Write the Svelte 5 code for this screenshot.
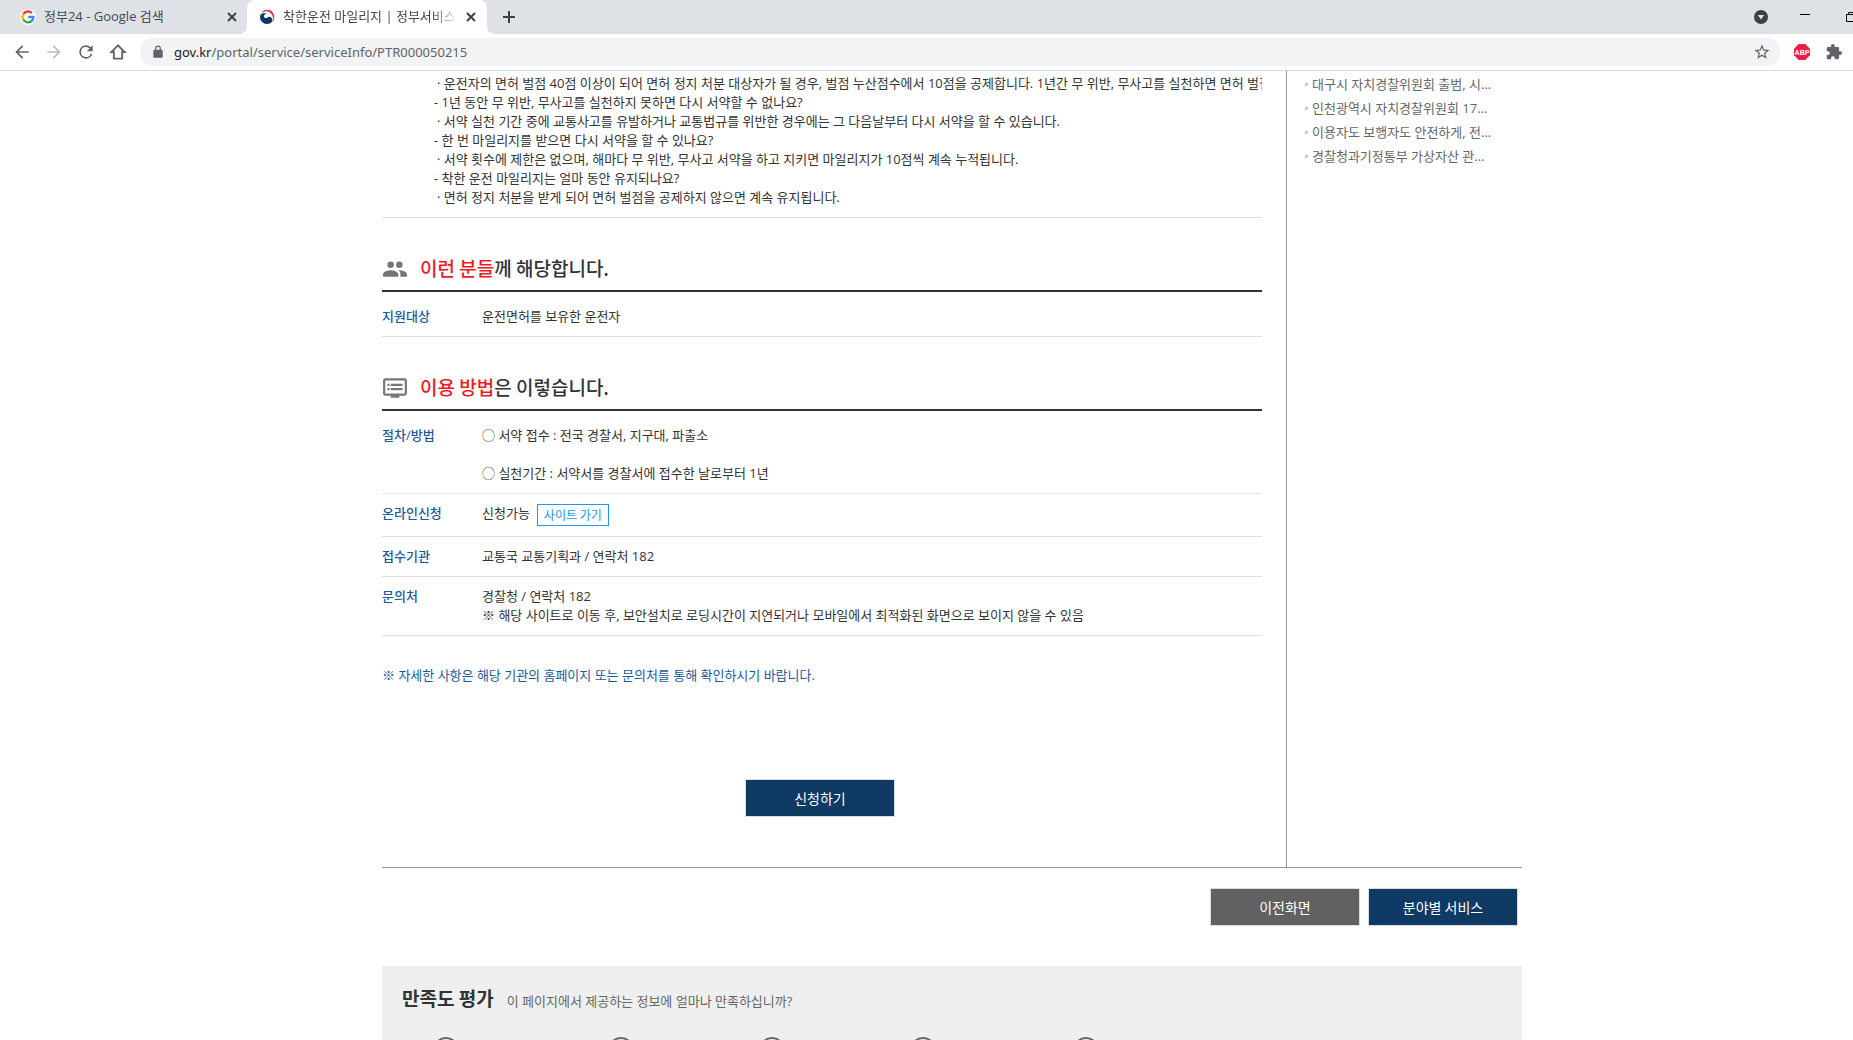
<!--
  Janela do navegador com a página de serviço do Governo 24.
-->
<script lang="ts">
  interface Row { label: string; lines: string[]; link?: string; }
  interface Section { icon: string; accent: string; rest: string; rows: Row[]; }

  const faq = [
    { answer: true, text: '· 운전자의 면허 벌점 40점 이상이 되어 면허 정지 처분 대상자가 될 경우, 벌점 누산점수에서 10점을 공제합니다. 1년간 무 위반, 무사고를 실천하면 면허 벌점' },
    { answer: false, text: '- 1년 동안 무 위반, 무사고를 실천하지 못하면 다시 서약할 수 없나요?' },
    { answer: true, text: '· 서약 실천 기간 중에 교통사고를 유발하거나 교통법규를 위반한 경우에는 그 다음날부터 다시 서약을 할 수 있습니다.' },
    { answer: false, text: '- 한 번 마일리지를 받으면 다시 서약을 할 수 있나요?' },
    { answer: true, text: '· 서약 횟수에 제한은 없으며, 해마다 무 위반, 무사고 서약을 하고 지키면 마일리지가 10점씩 계속 누적됩니다.' },
    { answer: false, text: '- 착한 운전 마일리지는 얼마 동안 유지되나요?' },
    { answer: true, text: '· 면허 정지 처분을 받게 되어 면허 벌점을 공제하지 않으면 계속 유지됩니다.' },
  ];

  const sections: Section[] = [
    {
      icon: 'people',
      accent: '이런 분들',
      rest: '께 해당합니다.',
      rows: [{ label: '지원대상', lines: ['운전면허를 보유한 운전자'] }],
    },
    {
      icon: 'screen',
      accent: '이용 방법',
      rest: '은 이렇습니다.',
      rows: [
        { label: '절차/방법', lines: ['◯ 서약 접수 : 전국 경찰서, 지구대, 파출소', '', '◯ 실천기간 : 서약서를 경찰서에 접수한 날로부터 1년'] },
        { label: '온라인신청', lines: ['신청가능'], link: '사이트 가기' },
        { label: '접수기관', lines: ['교통국 교통기획과 / 연락처 182'] },
        { label: '문의처', lines: ['경찰청 / 연락처 182', '※ 해당 사이트로 이동 후, 보안설치로 로딩시간이 지연되거나 모바일에서 최적화된 화면으로 보이지 않을 수 있음'] },
      ],
    },
  ];

  const news = [
    '대구시 자치경찰위원회 출범, 시...',
    '인천광역시 자치경찰위원회 17...',
    '이용자도 보행자도 안전하게, 전...',
    '경찰청과기정통부 가상자산 관...',
  ];

  const ratings = ['매우 만족', '만족', '보통', '불만족', '매우 불만족'];
  let rating = $state('');
</script>

<div class="window">
  <header>
    <div class="tabs">
      <div class="tab">
        <svg width="16" height="16" viewBox="0 0 16 16">
          <circle cx="8" cy="8" r="8" fill="#fff"/>
          <g fill="none" stroke-width="2.4">
            <path d="M11.9 4.100A5.400 5.400 0 0 0 3.300 5.300" stroke="#ea4335"/>
            <path d="M3.300 5.300a5.400 5.400 0 0 0 0 5.400" stroke="#fbbc05"/>
            <path d="M3.300 10.700a5.400 5.400 0 0 0 8.300 1.300" stroke="#34a853"/>
            <path d="M11.600 12A5.400 5.400 0 0 0 13.400 8H8.200" stroke="#4285f4"/>
          </g>
        </svg>
        <span class="tab-title">정부24 - Google 검색</span>
        <button class="close" aria-label="탭 닫기">
          <svg width="10" height="10" viewBox="0 0 10 10"><path d="M1 1l8 8M9 1l-8 8"/></svg>
        </button>
      </div>
      <div class="tab active">
        <svg width="16" height="16" viewBox="0 0 16 16">
          <circle cx="8" cy="8" r="7" fill="#0d3660"/>
          <path d="M7 1a7 7 0 0 1 6 12Q15 8 11.500 4.500 9.500 3 4.500 2.200 5.600 1.200 7 1z" fill="#e5384f"/>
          <path d="M2 4Q8 .5 12 4.500 15.500 8 12.800 13.500 14 9 11 7.800C8.800 7 8.200 9.800 6.200 9 3.800 8 5 5.400 7.500 4.600 5 3.800 3.400 4 2 5.500z" fill="#fff"/>
        </svg>
        <span class="tab-title fade">착한운전 마일리지 | 정부서비스</span>
        <button class="close" aria-label="탭 닫기">
          <svg width="10" height="10" viewBox="0 0 10 10"><path d="M1 1l8 8M9 1l-8 8"/></svg>
        </button>
      </div>
      <button class="new-tab" aria-label="새 탭">
        <svg width="12" height="12" viewBox="0 0 12 12"><path d="M6 0v12M0 6h12" stroke="#3c4043" stroke-width="2"/></svg>
      </button>
      <div class="controls">
        <button aria-label="탭 검색">
          <svg width="14" height="14" viewBox="0 0 14 14"><circle cx="7" cy="7" r="7" fill="#3c4043"/><path d="M3.8 5h6.4L7 9.6z" fill="#dee1e6"/></svg>
        </button>
        <button aria-label="최소화">
          <svg width="10" height="10" viewBox="0 0 10 10"><path d="M0 2.5h10" stroke="#000"/></svg>
        </button>
        <button class="restore" aria-label="이전 크기로">
          <svg width="10" height="10" viewBox="0 0 10 10" fill="none" stroke="#000"><path d="M.5 2.5h7v7h-7zM2.5 2.5v-2h7v7h-2"/></svg>
        </button>
      </div>
    </div>

    <div class="toolbar">
      <button aria-label="뒤로">
        <svg width="20" height="20" viewBox="0 0 24 24" fill="#5f6368"><path d="M20 11H7.83l5.59-5.59L12 4l-8 8 8 8 1.41-1.41L7.83 13H20z"/></svg>
      </button>
      <button aria-label="앞으로">
        <svg width="20" height="20" viewBox="0 0 24 24" fill="#babcbe"><path d="M12 4l-1.41 1.41L16.17 11H4v2h12.17l-5.58 5.59L12 20l8-8z"/></svg>
      </button>
      <button aria-label="새로고침">
        <svg width="20" height="20" viewBox="0 0 24 24" fill="#5f6368"><path d="M17.65 6.35A7.96 7.96 0 0 0 12 4a8 8 0 1 0 7.73 10h-2.08A6 6 0 1 1 12 6c1.66 0 3.14.69 4.22 1.78L13 11h7V4z"/></svg>
      </button>
      <button aria-label="홈">
        <svg width="20" height="20" viewBox="0 0 24 24" fill="none" stroke="#5f6368" stroke-width="2.2"><path d="M12 4l-8 8h3v8h10v-8h3z"/></svg>
      </button>
      <div class="omnibox">
        <svg width="14" height="14" viewBox="0 0 24 24" fill="#5f6368"><path d="M18 8h-1V6A5 5 0 0 0 7 6v2H6a2 2 0 0 0-2 2v10c0 1.1.9 2 2 2h12a2 2 0 0 0 2-2V10a2 2 0 0 0-2-2zM9 8V6a3 3 0 0 1 6 0v2z"/></svg>
        <a class="url" href="#top"><b>gov.kr</b>/portal/service/serviceInfo/PTR000050215</a>
        <button aria-label="북마크">
          <svg width="18" height="18" viewBox="0 0 24 24" fill="#5f6368"><path d="M22 9.24l-7.19-.62L12 2 9.19 8.63 2 9.24l5.46 4.73L5.82 21 12 17.27 18.18 21l-1.63-7.03zM12 15.4l-3.76 2.27 1-4.28-3.32-2.88 4.38-.38L12 6.1l1.71 4.04 4.38.38-3.32 2.88 1 4.28z"/></svg>
        </button>
      </div>
      <div class="extensions">
        <button aria-label="Adblock Plus">
          <svg width="16" height="16" viewBox="0 0 16 16">
            <path d="M4.7 0h6.6L16 4.7v6.6L11.3 16H4.7L0 11.3V4.7z" fill="#ed1e45"/>
            <text x="8" y="11" text-anchor="middle" font-size="7" font-weight="700" fill="#fff">ABP</text>
          </svg>
        </button>
        <button aria-label="확장 프로그램">
          <svg width="16" height="16" viewBox="1 1 22 22" fill="#5f6368"><path d="M20.5 11H19V7a2 2 0 0 0-2-2h-4V3.500a2.500 2.500 0 0 0-5 0V5H4a2 2 0 0 0-2 2v3.800h1.500a2.700 2.700 0 0 1 0 5.400H2V20c0 1.100.9 2 2 2h3.800v-1.500a2.700 2.700 0 0 1 5.400 0V22H17a2 2 0 0 0 2-2v-4h1.500a2.500 2.500 0 0 0 0-5z"/></svg>
        </button>
      </div>
    </div>
  </header>

  <div class="page" id="top">
    <div class="columns">
      <main>
        <div class="faq">
          {#each faq as item}
            <p class:answer={item.answer}>{item.text}</p>
          {/each}
        </div>

        {#each sections as section}
          <section>
            <h2>
              <svg width="26" height="26" viewBox="0 -1 24 24" fill="#767676">
                {#if section.icon === 'people'}
                  <path d="M16 11a3 3 0 1 0 0-6 3 3 0 0 0 0 6zm-8 0a3 3 0 1 0 0-6 3 3 0 0 0 0 6zm0 2c-2.330 0-7 1.170-7 3.500V19h14v-2.500C15 14.170 10.330 13 8 13zm8 0c-.29 0-.62.020-.97.050 1.160.840 1.970 1.970 1.970 3.450V19h6v-2.500c0-2.330-4.670-3.500-7-3.500z"/>
                {:else}
                  <path d="M21 3H3a2 2 0 0 0-2 2v12c0 1.100.9 2 2 2h5v2h8v-2h5a2 2 0 0 0 2-2V5a2 2 0 0 0-2-2zm0 14H3V5h18zm-2-9H8v2h11zm0 4H8v2h11zM7 8H5v2h2zm0 4H5v2h2z"/>
                {/if}
              </svg>
              <span><em>{section.accent}</em>{section.rest}</span>
            </h2>
            <dl>
              {#each section.rows as row}
                <div class="row">
                  <dt>{row.label}</dt>
                  <dd class:with-link={row.link}>
                    {#each row.lines as line}
                      <p>{line}</p>
                    {/each}
                    {#if row.link}
                      <a class="site-link" href="#top">{row.link}</a>
                    {/if}
                  </dd>
                </div>
              {/each}
            </dl>
          </section>
        {/each}

        <p class="notice">※ 자세한 사항은 해당 기관의 홈페이지 또는 문의처를 통해 확인하시기 바랍니다.</p>
        <div class="apply">
          <button class="btn">신청하기</button>
        </div>
      </main>

      <aside>
        <ul>
          {#each news as title}
            <li><a href="#top">{title}</a></li>
          {/each}
        </ul>
      </aside>
    </div>

    <div class="actions">
      <button class="btn gray">이전화면</button>
      <button class="btn">분야별 서비스</button>
    </div>

    <form class="survey">
      <div class="survey-head">
        <h3>만족도 평가</h3>
        <p>이 페이지에서 제공하는 정보에 얼마나 만족하십니까?</p>
      </div>
      <div class="ratings">
        {#each ratings as option}
          <input type="radio" name="rating" value={option} aria-label={option} bind:group={rating} />
        {/each}
      </div>
    </form>
  </div>
</div>

<style>
  .window {
    height: 100vh;
    overflow: hidden;
    display: flex;
    flex-direction: column;
    background: #fff;
    color: #333;
    font-family: "Open Sans", "Noto Sans CJK KR", sans-serif;
    font-size: 13px;
    line-height: 19px;
  }

  p, h2, h3, ul, dl, dd { margin: 0; padding: 0; }
  ul { list-style: none; }
  a { text-decoration: none; }
  svg { display: block; flex-shrink: 0; }

  button {
    border: 0;
    padding: 0;
    background: none;
    font: inherit;
    cursor: pointer;
  }

  header { flex-shrink: 0; border-bottom: 1px solid #dadce0; }

  /* barra de abas */
  .tabs {
    display: flex;
    height: 34px;
    overflow: hidden;
    background: #dee1e6;
  }

  .tab {
    display: flex;
    align-items: center;
    box-sizing: border-box;
    width: 240px;
    padding: 0 11px 0 12px;
    gap: 8px;
    color: #45494d;
  }
  .tab:first-child { width: 247px; padding-left: 20px; padding-right: 10px; }
  .tab.active {
    position: relative;
    background: #fff;
    border-radius: 8px 8px 0 0;
  }
  .tab.active::before,
  .tab.active::after {
    content: '';
    position: absolute;
    bottom: 0;
    width: 8px;
    height: 8px;
  }
  .tab.active::before {
    left: -8px;
    background: radial-gradient(circle at 0 0, transparent 8px, #fff 8px);
  }
  .tab.active::after {
    right: -8px;
    background: radial-gradient(circle at 100% 0, transparent 8px, #fff 8px);
  }

  .tab-title {
    flex: 1;
    overflow: hidden;
    padding-bottom: 2px;
    white-space: nowrap;
  }
  .fade { mask-image: linear-gradient(to right, #000 85%, transparent); }

  .close { stroke: #3c4043; stroke-width: 2; }
  .new-tab { margin-left: 16px; }

  .controls {
    display: flex;
    gap: 32px;
    margin-left: auto;
    margin-right: -3px;
    padding-bottom: 1px;
    align-items: center;
  }
  .restore { margin-left: 4px; }

  .toolbar {
    display: flex;
    align-items: center;
    height: 36px;
    padding: 0 11px 0 12px;
    gap: 12px;
  }

  .omnibox {
    flex: 1;
    display: flex;
    align-items: center;
    height: 28px;
    padding: 0 9px 0 11px;
    gap: 9px;
    border-radius: 14px;
    background: #f1f3f4;
  }

  .url {
    flex: 1;
    color: #5f6368;
    font-family: "Noto Sans", sans-serif;
  }
  .url b { font-weight: 400; color: #202124; }

  .extensions { display: flex; gap: 16px; margin-left: 2px; }
  .extensions text { font-family: "Liberation Sans", sans-serif; }

  /* conteúdo */
  .page { padding: 0 331px 0 382px; }

  .columns {
    display: flex;
    border-bottom: 1px solid #949494;
  }

  main {
    flex: 1;
    min-width: 0;
    padding-right: 24px;
    padding-bottom: 50px;
  }

  .faq {
    padding: 3px 0 10px 52px;
    border-bottom: 1px solid #e1e1e1;
  }
  .faq p { overflow: hidden; white-space: nowrap; }
  .faq .answer { padding-left: 3px; }

  h2, h3, .btn, .site-link { font-family: "Noto Sans CJK KR", sans-serif; }

  h2 {
    display: flex;
    align-items: center;
    gap: 12px;
    padding: 36px 0 8px;
    border-bottom: 2px solid #333;
    font-size: 19px;
    line-height: 28px;
    font-weight: 500;
  }
  h2 em { font-style: normal; color: #ed1c24; }

  .row {
    display: flex;
    padding: 10px 0;
    border-bottom: 1px solid #e1e1e1;
  }
  .row:first-child { padding-top: 15px; }

  dt {
    width: 100px;
    color: #1b5a9b;
    font-weight: 500;
  }
  dd { flex: 1; }
  dd p { min-height: 19px; }

  .with-link { display: flex; gap: 7px; }

  .site-link {
    box-sizing: border-box;
    height: 22px;
    padding: 0 6px;
    border: 1px solid #2196f3;
    color: #2196f3;
    font-size: 12px;
    line-height: 20px;
  }

  .notice { padding-top: 30px; color: #1b5a9b; }

  .btn {
    width: 150px;
    height: 38px;
    border: 1px solid #d9dce0;
    background: #0e3a63;
    color: #fff;
    font-size: 14px;
  }
  .btn.gray { background: #616161; }

  .apply {
    display: flex;
    justify-content: center;
    padding: 94px 4px 0 0;
  }

  aside {
    box-sizing: border-box;
    width: 236px;
    padding: 1px 0 0 18px;
    border-left: 1px solid #949494;
  }

  li {
    display: flex;
    align-items: center;
    gap: 4px;
    height: 24px;
  }
  li::before {
    content: '';
    width: 3px;
    height: 3px;
    background: #ccc;
  }
  li a { color: #666; }

  .actions {
    display: flex;
    justify-content: flex-end;
    gap: 8px;
    padding: 20px 4px 40px;
  }

  .survey { padding: 18px 20px; background: #efefef; }

  .survey-head {
    display: flex;
    align-items: baseline;
    gap: 13px;
  }
  .survey-head p { color: #666; }

  h3 {
    font-size: 19px;
    line-height: 28px;
    font-weight: 700;
  }

  .ratings {
    display: grid;
    grid-template-columns: 175px 151px 151px 163px auto;
    padding: 25px 31px;
  }

  input {
    appearance: none;
    box-sizing: border-box;
    width: 26px;
    height: 26px;
    margin: 0;
    border: 2px solid #666;
    border-radius: 50%;
  }
  input:checked { background: #0e3a63; }
</style>
